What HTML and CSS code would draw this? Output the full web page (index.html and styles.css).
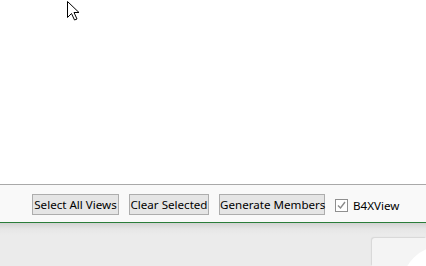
FILE: index.html
```html
<!DOCTYPE html>
<html>
<head>
<meta charset="utf-8">
<link rel="stylesheet" href="styles.css">
</head>
<body>
<div class="app">
  <div class="canvas">
    <svg class="cursor" width="13" height="20" viewBox="0 0 13 20">
      <path d="M0.5 0.5 L0.5 16.5 L4.5 12.5 L7.5 19 L10 18 L7 11.5 L12 11.5 Z" fill="#fff" stroke="#000" stroke-width="1" stroke-linejoin="miter"/>
    </svg>
  </div>
  <div class="toolbar">
    <button class="btn btn-select">Select All Views</button>
    <button class="btn btn-clear">Clear Selected</button>
    <button class="btn btn-generate">Generate Members</button>
    <label class="check">
      <span class="box">
        <svg width="11" height="11" viewBox="0 0 11 11"><path d="M2 5.5 L4.5 8 L9 2" fill="none" stroke="#8a8a8a" stroke-width="1.4"/></svg>
      </span>
      <span class="check-label">B4XView</span>
    </label>
  </div>
  <div class="lower">
    <div class="card"><div class="circle"></div></div>
  </div>
</div>
</body>
</html>
```
FILE: styles.css
```css
html, body {
  margin: 0;
  padding: 0;
  background: #ffffff;
}
.app {
  width: 426px;
  height: 266px;
  display: flex;
  flex-direction: column;
  overflow: hidden;
  font-family: "Noto Sans", "Open Sans", sans-serif;
}
.canvas {
  height: 184px;
  background: #ffffff;
  position: relative;
}
.cursor {
  position: absolute;
  left: 67px;
  top: 1px;
}
.toolbar {
  border-top: 1px solid #a9a9a9;
  border-bottom: 1px solid #2a7d3a;
  background: #f9f9f9;
  display: flex;
  align-items: flex-start;
  padding: 9px 0 0 32px;
  gap: 10px;
  box-sizing: border-box;
  height: 39px;
}
.btn {
  height: 21px;
  margin: 0;
  padding: 0;
  border: 1px solid #adadad;
  background: #e5e5e5;
  font-family: inherit;
  font-size: 11.6px;
  color: #000;
  line-height: 19px;
  border-radius: 0;
  box-sizing: border-box;
  text-align: center;
  white-space: nowrap;
}
.btn-select { width: 87px; }
.btn-clear { width: 80px; }
.btn-generate { width: 106px; }
.check {
  display: flex;
  align-items: center;
  gap: 5px;
  font-size: 11.6px;
  color: #000;
  height: 21px;
  margin-top: 1px;
}
.box {
  width: 11px;
  height: 11px;
  border: 1px solid #8f8f8f;
  background: #fff;
  display: flex;
}
.lower {
  flex: 1;
  background: linear-gradient(#d3d3d3, #e6e6e6 6px, #ebebeb 12px, #ebebeb);
  position: relative;
  display: flex;
  justify-content: flex-end;
  align-items: flex-end;
}
.card {
  width: 54px;
  height: 28px;
  background: #f4f4f4;
  border-top-left-radius: 3px;
  box-shadow: -1px -1px 1px #d8d8d8;
  position: relative;
  overflow: hidden;
}
.circle {
  position: absolute;
  left: 30px;
  top: 8px;
  width: 80px;
  height: 80px;
  border-radius: 50%;
  background: #ffffff;
}
```
